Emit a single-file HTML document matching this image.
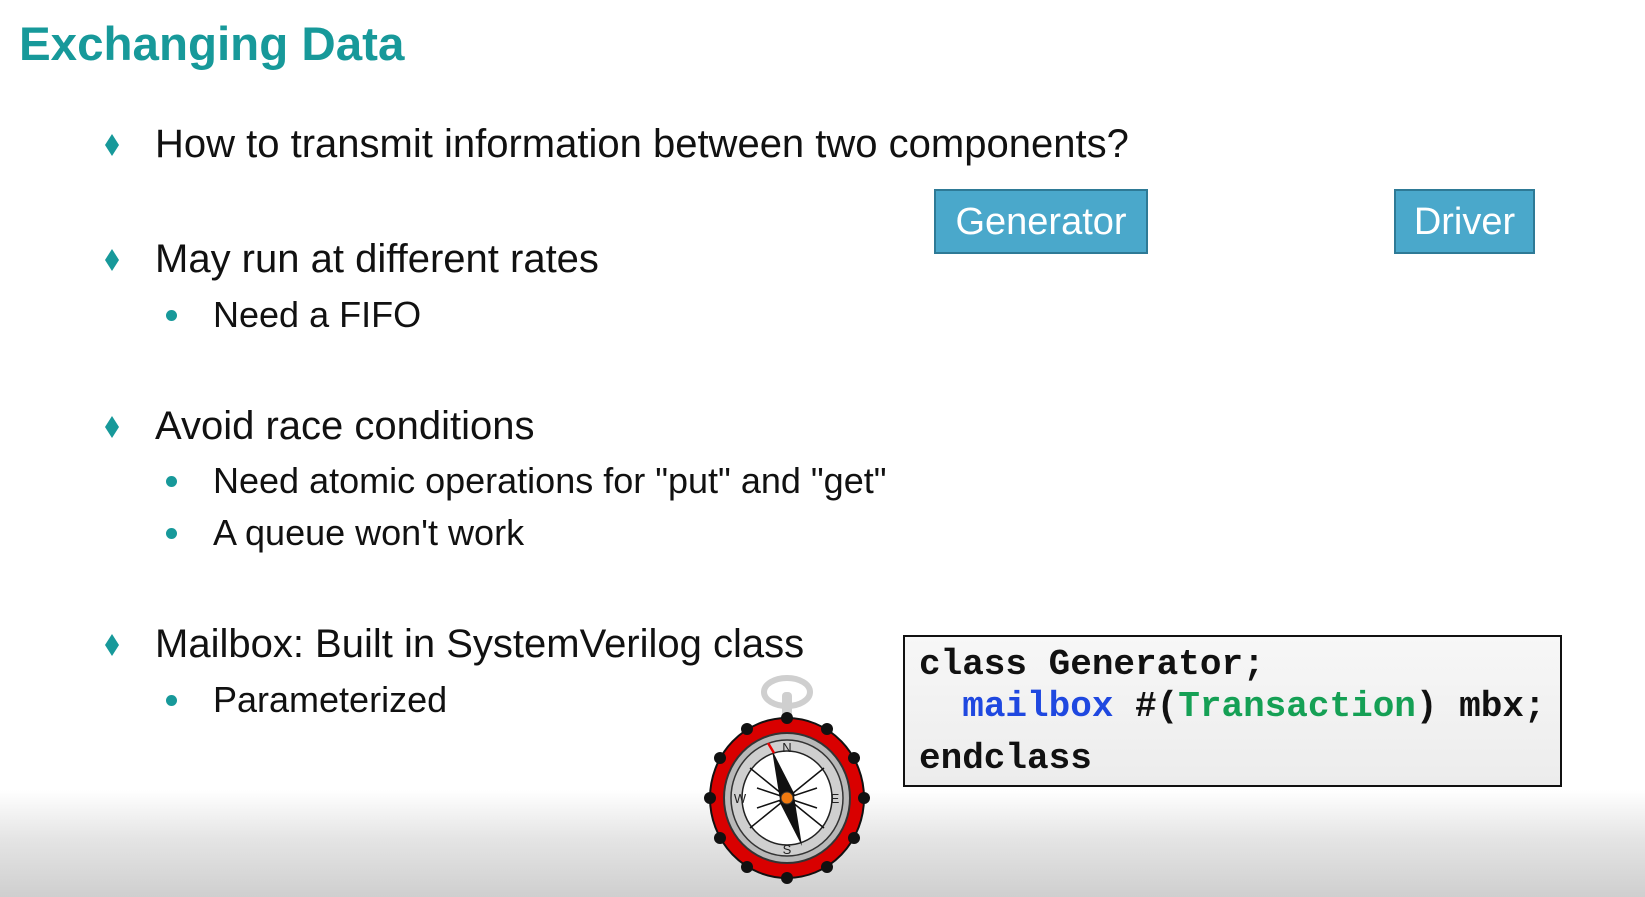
<!DOCTYPE html>
<html><head><meta charset="utf-8"><style>
body{margin:0;width:1645px;height:897px;overflow:hidden;position:relative;font-family:"Liberation Sans",sans-serif;background:linear-gradient(to bottom,#fff 0,#fff 790px,#e4e4e4 840px,#cfcfcf 897px);}
.t{position:absolute;white-space:nowrap;color:#111;}
.h{left:19px;top:17px;font-size:47.5px;font-weight:bold;color:#17999a;}
.l1{font-size:40px;left:155px;}
.l2{font-size:36px;left:213px;}
.d{position:absolute;left:105px;width:14px;height:22px;}
.b{position:absolute;left:166px;width:11px;height:11px;border-radius:50%;background:#17999a;}
.box{position:absolute;background:#4aa8cb;border:2px solid #2e7a96;color:#fff;font-size:38px;text-align:center;box-sizing:border-box;line-height:62px;}
.code{position:absolute;left:903px;top:635px;width:659px;height:152px;border:2px solid #111;box-sizing:border-box;background:linear-gradient(to bottom,#f7f7f7,#ececec);font-family:"Liberation Mono",monospace;font-weight:bold;font-size:36px;}
.code div{position:absolute;left:14px;white-space:pre;color:#111}
</style></head><body>
<div class="t h">Exchanging Data</div>

<svg class="d" style="top:134px" viewBox="0 0 14 22"><path d="M7 0L14 11L7 22L0 11Z" fill="#17999a"/></svg>
<div class="t l1" style="top:122px">How to transmit information between two components?</div>

<svg class="d" style="top:249px" viewBox="0 0 14 22"><path d="M7 0L14 11L7 22L0 11Z" fill="#17999a"/></svg>
<div class="t l1" style="top:237px">May run at different rates</div>
<div class="b" style="top:310px"></div>
<div class="t l2" style="top:294px">Need a FIFO</div>

<svg class="d" style="top:416px" viewBox="0 0 14 22"><path d="M7 0L14 11L7 22L0 11Z" fill="#17999a"/></svg>
<div class="t l1" style="top:404px">Avoid race conditions</div>
<div class="b" style="top:476px"></div>
<div class="t l2" style="top:460px">Need atomic operations for "put" and "get"</div>
<div class="b" style="top:528px"></div>
<div class="t l2" style="top:512px">A queue won't work</div>

<svg class="d" style="top:634px" viewBox="0 0 14 22"><path d="M7 0L14 11L7 22L0 11Z" fill="#17999a"/></svg>
<div class="t l1" style="top:622px">Mailbox: Built in SystemVerilog class</div>
<div class="b" style="top:695px"></div>
<div class="t l2" style="top:679px">Parameterized</div>

<div class="box" style="left:934px;top:189px;width:214px;height:65px">Generator</div>
<div class="box" style="left:1394px;top:189px;width:141px;height:65px">Driver</div>

<div class="code">
<div style="top:7px">class Generator;</div>
<div style="top:49px">  <span style="color:#1f48e0">mailbox</span> #(<span style="color:#15a055">Transaction</span>) mbx;</div>
<div style="top:101px">endclass</div>
</div>

<svg style="position:absolute;left:700px;top:670px" width="180" height="227" viewBox="700 670 180 227">
<ellipse cx="787" cy="692" rx="23" ry="14" fill="none" stroke="#cfcfcf" stroke-width="6"/>
<rect x="782" y="692" width="10" height="28" rx="4" fill="#cfcfcf"/>
<ellipse cx="787" cy="798" rx="77" ry="80" fill="#d90000" stroke="#111" stroke-width="2"/>
<g fill="#111">
<circle cx="787" cy="718" r="6"/><circle cx="787" cy="878" r="6"/><circle cx="710" cy="798" r="6"/><circle cx="864" cy="798" r="6"/>
<circle cx="747" cy="729" r="6"/><circle cx="827" cy="729" r="6"/><circle cx="747" cy="867" r="6"/><circle cx="827" cy="867" r="6"/>
<circle cx="720" cy="758" r="6"/><circle cx="854" cy="758" r="6"/><circle cx="720" cy="838" r="6"/><circle cx="854" cy="838" r="6"/>
</g>
<ellipse cx="787" cy="798" rx="63" ry="65" fill="#b8b8b8" stroke="#333" stroke-width="2"/>
<ellipse cx="787" cy="798" rx="56" ry="58" fill="#cfcfcf" stroke="#333" stroke-width="1.5"/>
<ellipse cx="787" cy="798" rx="45" ry="47" fill="#fff" stroke="#222" stroke-width="1.5"/>
<g font-family="Liberation Sans" font-size="13" fill="#222" text-anchor="middle">
<text x="787" y="752">N</text><text x="787" y="854">S</text><text x="740" y="803">W</text><text x="835" y="803">E</text>
</g>
<g fill="#111">
<path d="M787 798L750 768L787 798L824 768Z" stroke="#111" stroke-width="1.5"/>
<path d="M787 798L750 828M787 798L824 828" stroke="#111" stroke-width="1.5"/>
<path d="M787 798L757 788L787 798L817 788M787 798L757 808M787 798L817 808" stroke="#111" stroke-width="1.5"/>
<path d="M772 750L795 795L780 800Z"/>
<path d="M802 846L779 801L794 796Z"/>
</g>
<path d="M768 743L774 753" stroke="#e00" stroke-width="2.5"/>
<circle cx="787" cy="798" r="6" fill="#f07a10" stroke="#333"/>
</svg>
</body></html>
